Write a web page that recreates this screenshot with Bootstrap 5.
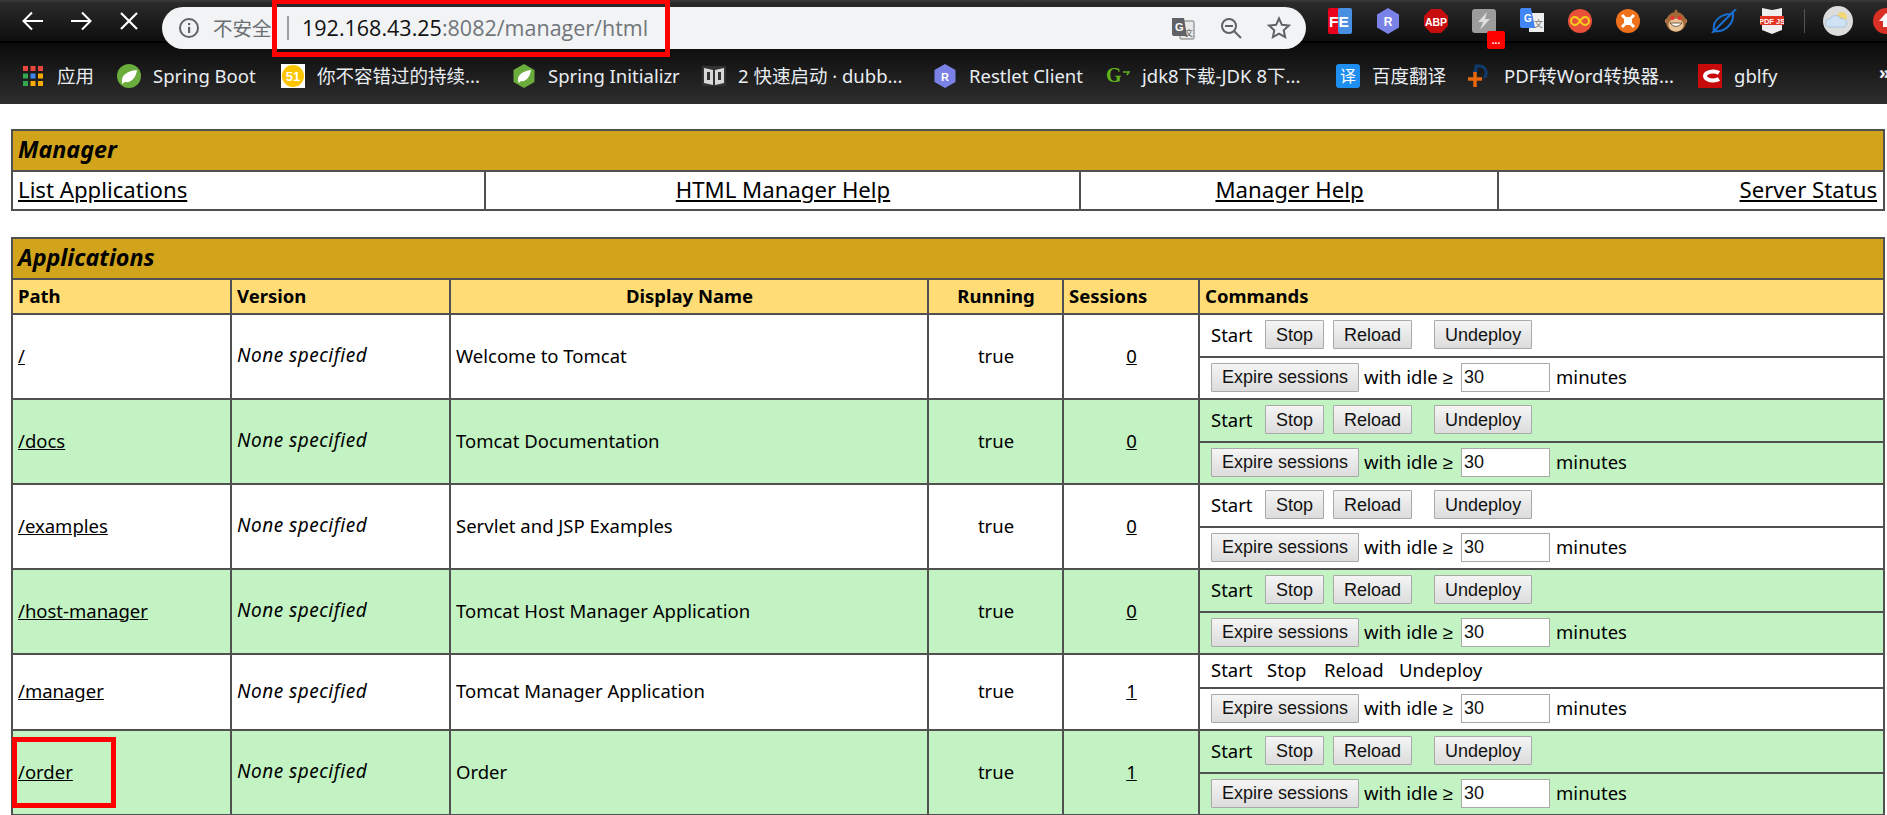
<!DOCTYPE html>
<html lang="zh-CN">
<head>
<meta charset="utf-8">
<title>/manager</title>
<link rel="stylesheet" href="https://cdn.jsdelivr.net/npm/bootstrap@5.3.0/dist/css/bootstrap.min.css">
<style>
html,body{height:815px;overflow:hidden;background:#fff}
body{position:relative;font-family:"Noto Sans","Noto Sans CJK SC",sans-serif;font-size:18.5px;color:#000}
.chrome-top{height:43px;background:linear-gradient(#3a3a3a 0,#2a2a2a 3px,#0f0f0f 40px);border-bottom:2px solid #000}
.nav-ico{width:48px;height:41px}
.nav-pad{padding-left:9px;width:162px;flex:none}
.omni{width:1144px;height:42px;margin-top:7px;background:#f1f3f4;border-radius:21px;position:relative;z-index:2;flex:none;padding-left:16px}
.omni-secure{color:#6c7073;font-size:19.5px;font-family:"Noto Sans CJK SC",sans-serif;margin-left:13px;width:62px;white-space:nowrap}
.omni-sep{width:2px;height:24px;background:#9aa0a6;margin:0 13px 0 12px;flex:none}
.omni-url{font-family:"Open Sans",sans-serif;font-size:21.5px;color:#70757a;white-space:nowrap}
.omni-url b{font-weight:400;color:#111}
.omni-end{margin-left:auto;padding-right:15px;gap:24px}
.ext-row{margin-left:10px;flex:none}
.ext{width:48px;height:41px;flex:none}
.ext-sep{width:1px;height:24px;background:#555;margin:0 9px 0 8px;flex:none}
.ext-badge{position:absolute;left:1487px;top:31px;width:18px;height:18px;background:#f00;border-radius:2px;color:#fff;font:700 10px/20px "Liberation Sans",sans-serif;text-align:center;z-index:3}
.marks{height:61px;padding-top:5px;background:linear-gradient(#0b0b0b,#2e2e2e);padding-left:23px;color:#e9edf2;font-size:18.5px;white-space:nowrap;position:relative}
.mark-item{gap:12px;margin-right:25px;flex:none}
.mark-item svg{flex:none}
.gap-first{gap:14px}
.w-0{width:35px}
.w-1{width:103px}
.w-a{width:170px}
.w-b{width:129px}
.w-c{width:170px}
.w-r{width:112px}
.w-d{width:169px}
.w-t{width:71px}
.w-e{width:169px}
.marks-more{position:absolute;left:1879px;top:15px;font-weight:700}
.page-wrap{padding:25px 0 0 11px}
.tc-table{table-layout:fixed;width:1872px;margin:0;border-collapse:collapse}
.tc-table.table>*>tr>*{border:2px solid #505050;padding:0 4px 2px 5px;background:#fff;vertical-align:middle;color:#000;box-shadow:none}
.tc-table.table>*>tr.title-row>*{background:#d2a41c;font-weight:700;font-style:italic;font-size:23.300px;height:41px;padding-left:5px}
.tc-table.table>*>tr.link-row>*{height:39px;font-size:22.200px}
.tc-table.table>*>tr.link-row>.text-end{padding-right:6px}
.tc-table.table>*>tr.head-row>*{background:#ffdc75;font-weight:700;font-size:18.5px;height:35px}
.tc-table.table>*>tr.alt>*{background:#c3f3c3}
.tc-table a{color:#000}
.tc-table em{font-size:19px;letter-spacing:.5px}
.gap-tbl{margin-top:26px}
.c1{width:219px}.c2{width:219px}.c3{width:478px}.c4{width:135px}.c5{width:136px}.c6{width:685px}
.m1{width:473px}.m2{width:595px}.m3{width:418px}.m4{width:386px}
.tc-table.table>*>tr>td.cmd{padding-left:11px}
.h-top{height:43px}.h-bot{height:42px}.h-plain{height:34px}
.tc-btn{font:18px/1 "Liberation Sans",sans-serif;height:29px;padding:0 10px;border:1px solid #a9a9a9;border-radius:1px;background:linear-gradient(#f5f5f5,#dcdcdc);color:#111;flex:none}
.tc-input{font:18px "Liberation Sans",sans-serif;width:89px;height:29px;padding:0 2px;border:1px solid #a9a9a9;background:#fff;color:#111;border-radius:0;flex:none}
.start-lbl{width:54px}
.ml-stop{margin-right:9px}
.ml-reload{margin-right:22px}
.ml-expire{margin-right:5px}
.idle{width:97px;white-space:nowrap}
.ge-sign{font-family:"Liberation Sans",sans-serif}
.min-lbl{margin-left:6px}
.p-start{width:56px}.p-stop{width:57px}.p-reload{width:75px}
.mark-red{position:absolute;border:5px solid #f00;z-index:5;pointer-events:none}
.mr-url{left:272px;top:0;width:398px;height:57px;border-top-width:4px}
.mr-order{left:12px;top:737px;width:104px;height:71px}
</style>
</head>
<body>

<div class="chrome-top d-flex">
  <div class="nav-pad d-flex">
    <div class="nav-ico d-flex align-items-center justify-content-center"><svg width="22" height="20" viewBox="0 0 22 20" fill="none" stroke="#fff" stroke-width="2"><path d="M21 10H2M10 1.500 1.500 10l8.500 8.500"/></svg></div>
    <div class="nav-ico d-flex align-items-center justify-content-center"><svg width="22" height="20" viewBox="0 0 22 20" fill="none" stroke="#fff" stroke-width="2"><path d="M1 10h19M12 1.500 20.500 10 12 18.500"/></svg></div>
    <div class="nav-ico d-flex align-items-center justify-content-center"><svg width="20" height="20" viewBox="0 0 20 20" fill="none" stroke="#fff" stroke-width="2.200"><path d="M2 2l16 16M18 2 2 18"/></svg></div>
  </div>
  <div class="omni d-flex align-items-center">
    <svg width="22" height="22" viewBox="0 0 22 22"><circle cx="11" cy="11" r="9" fill="none" stroke="#5f6368" stroke-width="2"/><rect x="10" y="10" width="2.200" height="6" fill="#5f6368"/><rect x="10" y="6" width="2.200" height="2.200" fill="#5f6368"/></svg>
    <span class="omni-secure">不安全</span>
    <span class="omni-sep"></span>
    <span class="omni-url"><b>192.168.43.25</b>:8082/manager/html</span>
    <div class="omni-end d-flex align-items-center">
      <svg width="24" height="24" viewBox="0 0 24 24"><rect x="9" y="5" width="14" height="18" rx="1" fill="#e8e8e8" stroke="#777"/><path d="M1 2h12l3 18H3a2 2 0 0 1-2-2z" fill="#5f6368"/><text x="4" y="15" font-family="Liberation Sans" font-size="11" font-weight="700" fill="#fff">G</text><text x="14" y="20" font-family="Noto Sans CJK SC" font-size="8" fill="#555">文</text></svg>
      <svg width="24" height="24" viewBox="0 0 24 24" fill="none" stroke="#5f6368" stroke-width="2"><circle cx="10" cy="10" r="7"/><path d="M15 15l7 7M6 10h8"/></svg>
      <svg width="24" height="24" viewBox="0 0 24 24" fill="none" stroke="#5f6368" stroke-width="2"><path d="M12 2.500l2.900 6.300 6.900.8-5.100 4.700 1.400 6.800L12 17.700l-6.100 3.400 1.400-6.800L2.200 9.600l6.900-.8z"/></svg>
    </div>
  </div>
  <div class="ext-row d-flex align-items-center">
    <div class="ext d-flex align-items-center justify-content-center"><svg width="24" height="26" viewBox="0 0 24 26"><rect width="12" height="26" rx="2" fill="#e8001c"/><rect x="10" width="14" height="26" rx="2" fill="#4a90e2"/><text x="1" y="19" font-family="Liberation Sans" font-size="15.500" font-weight="700" fill="#fff">FE</text></svg></div>
    <div class="ext d-flex align-items-center justify-content-center"><svg width="24" height="26" viewBox="0 0 24 26"><path d="M12 0l11 6.500v13L12 26 1 19.500v-13z" fill="#7a82e8"/><text x="12" y="18" text-anchor="middle" font-family="Liberation Sans" font-size="12" font-weight="700" fill="#fff">R</text></svg></div>
    <div class="ext d-flex align-items-center justify-content-center"><svg width="24" height="24" viewBox="0 0 24 24"><path d="M7 0h10l7 7v10l-7 7H7l-7-7V7z" fill="#c70d0d"/><text x="12" y="16.500" text-anchor="middle" font-family="Liberation Sans" font-size="10.500" font-weight="700" fill="#fff">ABP</text></svg></div>
    <div class="ext d-flex align-items-center justify-content-center"><svg width="24" height="24" viewBox="0 0 24 24"><rect width="24" height="24" rx="3" fill="#9c9c9c"/><path d="M15 3 6 13h5l-3 8 10-11h-5z" fill="#dedede"/></svg></div>
    <div class="ext d-flex align-items-center justify-content-center"><svg width="24" height="26" viewBox="0 0 24 26"><rect x="9" y="5" width="15" height="19" fill="#eee"/><path d="M0 2a2 2 0 0 1 2-2h9l4 20H2a2 2 0 0 1-2-2z" fill="#4285f4"/><text x="4" y="14" font-family="Liberation Sans" font-size="10" font-weight="700" fill="#fff">G</text><text x="14" y="19" font-family="Noto Sans CJK SC" font-size="9" fill="#777">文</text></svg></div>
    <div class="ext d-flex align-items-center justify-content-center"><svg width="24" height="24" viewBox="0 0 24 24"><circle cx="12" cy="12" r="12" fill="#e8503a"/><path d="M12 12c-2-3-3.500-4-5-4a4 4 0 0 0 0 8c1.500 0 3-1 5-4s3.500-4 5-4a4 4 0 0 1 0 8c-1.500 0-3-1-5-4z" fill="none" stroke="#f6cf1c" stroke-width="2"/></svg></div>
    <div class="ext d-flex align-items-center justify-content-center"><svg width="24" height="24" viewBox="0 0 24 24"><circle cx="12" cy="12" r="12" fill="#f0711c"/><rect x="8" y="8" width="8" height="8" rx="2" fill="#fff"/><path d="M6 6l3 3M18 6l-3 3M6 18l3-3M18 18l-3-3" stroke="#fff" stroke-width="3"/></svg></div>
    <div class="ext d-flex align-items-center justify-content-center"><svg width="22" height="24" viewBox="0 0 22 24"><circle cx="2.500" cy="12" r="2.500" fill="#c58a52"/><circle cx="19.500" cy="12" r="2.500" fill="#c58a52"/><circle cx="11" cy="13" r="10" fill="#a56a38"/><ellipse cx="11" cy="16" rx="7.500" ry="6.500" fill="#e8c397"/><circle cx="7.500" cy="9" r="2" fill="#e33"/><circle cx="14.500" cy="9" r="2" fill="#e33"/><path d="M5 14q6 7 12 0z" fill="#fff" stroke="#5a3a1e" stroke-width=".8"/><path d="M9 3l2-3 2 3" fill="#a56a38"/></svg></div>
    <div class="ext d-flex align-items-center justify-content-center"><svg width="26" height="24" viewBox="0 0 26 24" fill="none" stroke="#1a6fd1" stroke-width="2"><path d="M3 22C1 12 10 4 22 5 23 15 13 24 3 22zM1 24 25 0"/></svg></div>
    <div class="ext d-flex align-items-center justify-content-center"><svg width="24" height="26" viewBox="0 0 24 26"><path d="M2 0l10 2 10-2v22l-10 4-10-4z" fill="#eee"/><rect y="8" width="24" height="9" fill="#e53323"/><text x="12" y="15.500" text-anchor="middle" font-family="Liberation Sans" font-size="7.500" font-weight="700" fill="#fff">PDF JS</text></svg></div>
    <span class="ext-sep"></span>
    <div class="ext d-flex align-items-center justify-content-center"><svg width="30" height="30" viewBox="0 0 30 30"><circle cx="15" cy="15" r="15" fill="#dcdcdc"/><circle cx="19" cy="11" r="5" fill="#f2d675"/><path d="M6 21a4 4 0 0 1 1-8 6 6 0 0 1 11 0 4 4 0 0 1 3 8z" fill="#cfe2f3" stroke="#a9c6e0"/></svg></div>
    <div class="ext d-flex align-items-center justify-content-center"><svg width="26" height="26" viewBox="0 0 26 26"><circle cx="13" cy="13" r="13" fill="#d93025"/><path d="M13 5l7 8h-4v6h-6v-6H6z" fill="#fff"/></svg></div>
  </div>
</div>
<div class="ext-badge">...</div>

<div class="marks d-flex align-items-center">
  <div class="mark-item gap-first d-flex align-items-center"><svg width="20" height="20" viewBox="0 0 20 20"><rect width="5" height="5" fill="#e8453c"/><rect x="7.500" width="5" height="5" fill="#e8453c"/><rect x="15" width="5" height="5" fill="#e8453c"/><rect y="7.500" width="5" height="5" fill="#34a853"/><rect x="7.500" y="7.500" width="5" height="5" fill="#4285f4"/><rect x="15" y="7.500" width="5" height="5" fill="#f9ab00"/><rect y="15" width="5" height="5" fill="#34a853"/><rect x="7.500" y="15" width="5" height="5" fill="#f9ab00"/><rect x="15" y="15" width="5" height="5" fill="#f9ab00"/></svg><span class="w-0 d-block">应用</span></div>
  <div class="mark-item d-flex align-items-center"><svg width="24" height="24" viewBox="0 0 24 24"><circle cx="12" cy="12" r="12" fill="#6aad3d"/><path d="M5 18c-1-6 4-11 15-12-1 8-6 13-12 12l-3 2z" fill="#fff"/></svg><span class="w-1 d-block">Spring Boot</span></div>
  <div class="mark-item d-flex align-items-center"><svg width="24" height="24" viewBox="0 0 24 24"><rect width="24" height="24" fill="#fff"/><circle cx="12" cy="12" r="11" fill="#fdc500"/><text x="12" y="17" text-anchor="middle" font-family="Liberation Sans" font-size="13" font-weight="700" fill="#fff">51</text></svg><span class="w-a d-block">你不容错过的持续...</span></div>
  <div class="mark-item d-flex align-items-center"><svg width="24" height="24" viewBox="0 0 24 24"><path d="M12 0l10.500 6v12L12 24 1.500 18V6z" fill="#6aad3d"/><path d="M6 17c-1-5 4-10 13-11-1 7-5 12-10 11l-2 2z" fill="#fff"/></svg><span class="w-b d-block">Spring Initializr</span></div>
  <div class="mark-item d-flex align-items-center"><svg width="24" height="24" viewBox="0 0 24 24"><rect y="2" width="24" height="20" fill="#333"/><path d="M2 4l9 2v15l-9-2zM22 4l-9 2v15l9-2z" fill="#d8d8d8"/><path d="M5 8h3v8H5zM16 8h3v8h-3z" fill="#333"/></svg><span class="w-c d-block">2 快速启动 · dubb...</span></div>
  <div class="mark-item d-flex align-items-center"><svg width="24" height="24" viewBox="0 0 24 24"><path d="M12 0l10.500 6v12L12 24 1.500 18V6z" fill="#7a82e8"/><text x="12" y="16.500" text-anchor="middle" font-family="Liberation Sans" font-size="11" font-weight="700" fill="#fff">R</text></svg><span class="w-r d-block">Restlet Client</span></div>
  <div class="mark-item d-flex align-items-center"><svg width="24" height="24" viewBox="0 0 24 24"><text x="0" y="18" font-family="Liberation Serif" font-size="20" font-weight="700" fill="#63b31d">G</text><path d="M17 8h6l-2 3" fill="none" stroke="#63b31d" stroke-width="1.500"/></svg><span class="w-d d-block">jdk8下载-JDK 8下...</span></div>
  <div class="mark-item d-flex align-items-center"><svg width="24" height="24" viewBox="0 0 24 24"><rect width="24" height="24" rx="3" fill="#1e8ff0"/><text x="12" y="18" text-anchor="middle" font-family="Noto Sans CJK SC" font-size="16" fill="#fff">译</text></svg><span class="w-t d-block">百度翻译</span></div>
  <div class="mark-item d-flex align-items-center"><svg width="24" height="24" viewBox="0 0 24 24"><path d="M5 7h3V2h4a7 7 0 0 1 4 12" fill="none" stroke="#0f3a6b" stroke-width="3"/><path d="M0 15h14M7 8v15" stroke="#e8660c" stroke-width="3.500"/></svg><span class="w-e d-block">PDF转Word转换器...</span></div>
  <div class="mark-item d-flex align-items-center"><svg width="24" height="24" viewBox="0 0 24 24"><rect width="24" height="24" fill="#c80a0a"/><path d="M21 9a8 4.500 0 1 0 0 6" fill="none" stroke="#fff" stroke-width="4"/></svg><span>gblfy</span></div>
  <span class="marks-more">»</span>
</div>

<div class="page-wrap">
  <table class="table tc-table">
    <colgroup><col class="m1"><col class="m2"><col class="m3"><col class="m4"></colgroup>
    <tbody>
      <tr class="title-row"><td colspan="4">Manager</td></tr>
      <tr class="link-row">
        <td class="text-start"><a href="#">List Applications</a></td>
        <td class="text-center"><a href="#">HTML Manager Help</a></td>
        <td class="text-center"><a href="#">Manager Help</a></td>
        <td class="text-end"><a href="#">Server Status</a></td>
      </tr>
    </tbody>
  </table>

  <table class="table tc-table gap-tbl">
    <colgroup><col class="c1"><col class="c2"><col class="c3"><col class="c4"><col class="c5"><col class="c6"></colgroup>
    <tbody>
      <tr class="title-row"><td colspan="6">Applications</td></tr>
      <tr class="head-row">
        <td>Path</td><td>Version</td><td class="text-center">Display Name</td><td class="text-center">Running</td><td>Sessions</td><td>Commands</td>
      </tr>

      <tr class="h-top">
        <td rowspan="2"><a href="#">/</a></td><td rowspan="2"><em>None specified</em></td><td rowspan="2">Welcome to Tomcat</td><td rowspan="2" class="text-center">true</td><td rowspan="2" class="text-center"><a href="#">0</a></td>
        <td class="cmd"><div class="d-flex align-items-center"><span class="start-lbl">Start</span><button class="tc-btn ml-stop">Stop</button><button class="tc-btn ml-reload">Reload</button><button class="tc-btn">Undeploy</button></div></td>
      </tr>
      <tr class="h-bot"><td class="cmd"><div class="d-flex align-items-center"><button class="tc-btn ml-expire">Expire sessions</button><span class="idle">with idle <span class="ge-sign">≥</span></span><input class="tc-input" value="30"><span class="min-lbl">minutes</span></div></td></tr>

      <tr class="h-top alt">
        <td rowspan="2"><a href="#">/docs</a></td><td rowspan="2"><em>None specified</em></td><td rowspan="2">Tomcat Documentation</td><td rowspan="2" class="text-center">true</td><td rowspan="2" class="text-center"><a href="#">0</a></td>
        <td class="cmd"><div class="d-flex align-items-center"><span class="start-lbl">Start</span><button class="tc-btn ml-stop">Stop</button><button class="tc-btn ml-reload">Reload</button><button class="tc-btn">Undeploy</button></div></td>
      </tr>
      <tr class="h-bot alt"><td class="cmd"><div class="d-flex align-items-center"><button class="tc-btn ml-expire">Expire sessions</button><span class="idle">with idle <span class="ge-sign">≥</span></span><input class="tc-input" value="30"><span class="min-lbl">minutes</span></div></td></tr>

      <tr class="h-top">
        <td rowspan="2"><a href="#">/examples</a></td><td rowspan="2"><em>None specified</em></td><td rowspan="2">Servlet and JSP Examples</td><td rowspan="2" class="text-center">true</td><td rowspan="2" class="text-center"><a href="#">0</a></td>
        <td class="cmd"><div class="d-flex align-items-center"><span class="start-lbl">Start</span><button class="tc-btn ml-stop">Stop</button><button class="tc-btn ml-reload">Reload</button><button class="tc-btn">Undeploy</button></div></td>
      </tr>
      <tr class="h-bot"><td class="cmd"><div class="d-flex align-items-center"><button class="tc-btn ml-expire">Expire sessions</button><span class="idle">with idle <span class="ge-sign">≥</span></span><input class="tc-input" value="30"><span class="min-lbl">minutes</span></div></td></tr>

      <tr class="h-top alt">
        <td rowspan="2"><a href="#">/host-manager</a></td><td rowspan="2"><em>None specified</em></td><td rowspan="2">Tomcat Host Manager Application</td><td rowspan="2" class="text-center">true</td><td rowspan="2" class="text-center"><a href="#">0</a></td>
        <td class="cmd"><div class="d-flex align-items-center"><span class="start-lbl">Start</span><button class="tc-btn ml-stop">Stop</button><button class="tc-btn ml-reload">Reload</button><button class="tc-btn">Undeploy</button></div></td>
      </tr>
      <tr class="h-bot alt"><td class="cmd"><div class="d-flex align-items-center"><button class="tc-btn ml-expire">Expire sessions</button><span class="idle">with idle <span class="ge-sign">≥</span></span><input class="tc-input" value="30"><span class="min-lbl">minutes</span></div></td></tr>

      <tr class="h-plain">
        <td rowspan="2"><a href="#">/manager</a></td><td rowspan="2"><em>None specified</em></td><td rowspan="2">Tomcat Manager Application</td><td rowspan="2" class="text-center">true</td><td rowspan="2" class="text-center"><a href="#">1</a></td>
        <td class="cmd"><div class="d-flex align-items-center"><span class="p-start">Start</span><span class="p-stop">Stop</span><span class="p-reload">Reload</span><span>Undeploy</span></div></td>
      </tr>
      <tr class="h-bot"><td class="cmd"><div class="d-flex align-items-center"><button class="tc-btn ml-expire">Expire sessions</button><span class="idle">with idle <span class="ge-sign">≥</span></span><input class="tc-input" value="30"><span class="min-lbl">minutes</span></div></td></tr>

      <tr class="h-top alt">
        <td rowspan="2"><a href="#">/order</a></td><td rowspan="2"><em>None specified</em></td><td rowspan="2">Order</td><td rowspan="2" class="text-center">true</td><td rowspan="2" class="text-center"><a href="#">1</a></td>
        <td class="cmd"><div class="d-flex align-items-center"><span class="start-lbl">Start</span><button class="tc-btn ml-stop">Stop</button><button class="tc-btn ml-reload">Reload</button><button class="tc-btn">Undeploy</button></div></td>
      </tr>
      <tr class="h-bot alt"><td class="cmd"><div class="d-flex align-items-center"><button class="tc-btn ml-expire">Expire sessions</button><span class="idle">with idle <span class="ge-sign">≥</span></span><input class="tc-input" value="30"><span class="min-lbl">minutes</span></div></td></tr>
    </tbody>
  </table>
</div>

<div class="mark-red mr-url"></div>
<div class="mark-red mr-order"></div>

<script src="https://cdn.jsdelivr.net/npm/bootstrap@5.3.0/dist/js/bootstrap.bundle.min.js"></script>
</body>
</html>
